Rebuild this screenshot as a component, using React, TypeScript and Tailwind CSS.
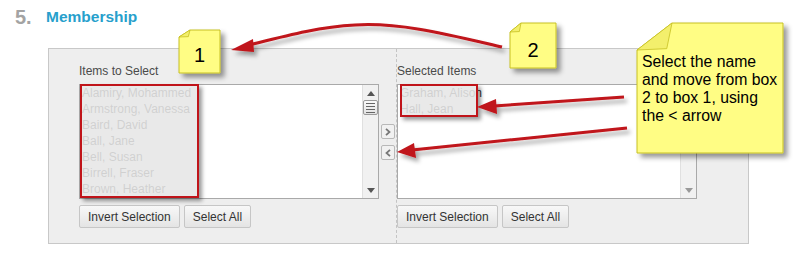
import React from "react";

const leftItems = [
  "Alamiry, Mohammed",
  "Armstrong, Vanessa",
  "Baird, David",
  "Ball, Jane",
  "Bell, Susan",
  "Birrell, Fraser",
  "Brown, Heather",
];
const rightItems = ["Graham, Alison", "Hall, Jean"];

function Btn({ children }: { children: React.ReactNode }) {
  return (
    <button className="h-[23px] px-[8px] border border-[#c6c6c6] rounded-[2px] bg-gradient-to-b from-[#f8f8f8] to-[#e4e4e4] text-[12px] text-[#333] leading-none">
      {children}
    </button>
  );
}

function UpTri({ color }: { color: string }) {
  return (
    <svg width="8" height="5" viewBox="0 0 8 5">
      <polygon points="0,5 8,5 4,0" fill={color} />
    </svg>
  );
}
function DownTri({ color }: { color: string }) {
  return (
    <svg width="8" height="5" viewBox="0 0 8 5">
      <polygon points="0,0 8,0 4,5" fill={color} />
    </svg>
  );
}

function Note({
  x,
  y,
  w,
  h,
  cx,
  cy,
}: {
  x: number;
  y: number;
  w: number;
  h: number;
  cx: number;
  cy: number;
}) {
  const pts = `${x + cx},${y} ${x + w},${y} ${x + w},${y + h} ${x},${y + h} ${x},${y + cy}`;
  return (
    <g>
      <polygon points={pts} fill="#fffd84" stroke="#c7c023" strokeWidth="1" filter="url(#nsh)" />
      <polygon
        points={`${x},${y + cy} ${x + cx},${y} ${x + cx * 0.85},${y + cy * 0.95}`}
        fill="#f3ef6c"
        stroke="#c7c023"
        strokeWidth="0.8"
      />
    </g>
  );
}

export default function App() {
  return (
    <div className="relative w-[794px] h-[254px] bg-white overflow-hidden font-['Liberation_Sans',Arial,sans-serif]">
      {/* Title */}
      <div className="h-[48px] flex items-start pl-[15px] pt-[5px]">
        <span className="w-[31px] text-[20px] font-bold text-[#a3a3a3] leading-[24px]">5.</span>
        <span className="text-[15.5px] font-bold text-[#27a0cc] leading-[24px]">Membership</span>
      </div>

      {/* Panel */}
      <div className="ml-[48px] w-[701px] h-[196px] border border-[#c8c8c8] bg-[#eeeeee] flex">
        {/* Left column */}
        <div className="pl-[30px] pt-[14px] w-[330px] shrink-0">
          <div className="h-[16px] leading-[16px] text-[12px] text-[#4a4a4a]">Items to Select</div>
          <div className="relative mt-[5px] w-[300px] h-[115px] bg-white border border-[#a9a9a9]">
            <div className="text-[12px] leading-[16px] text-[#333] pl-[2px]">
              {leftItems.map((t) => (
                <div key={t}>{t}</div>
              ))}
            </div>
            {/* scrollbar */}
            <div className="absolute right-0 top-0 bottom-0 w-[16px] bg-[#f1f1f1] border-l border-[#e0e0e0] flex flex-col items-center">
              <div className="mt-[6px]">
                <UpTri color="#555" />
              </div>
              <div className="mt-[4px] w-[15px] h-[15px] border border-[#9a9a9a] rounded-[2px] bg-gradient-to-b from-[#fafafa] to-[#e2e2e2] flex flex-col items-center justify-center gap-[2px]">
                <div className="w-[9px] h-[1px] bg-[#666]" />
                <div className="w-[9px] h-[1px] bg-[#666]" />
                <div className="w-[9px] h-[1px] bg-[#666]" />
                <div className="w-[9px] h-[1px] bg-[#666]" />
              </div>
              <div className="mt-auto mb-[5px]">
                <DownTri color="#555" />
              </div>
            </div>
            {/* annotation box */}
            <div className="absolute left-[0px] top-[-1px] w-[119px] h-[114px] border-2 border-[#c0141a] bg-[rgba(230,230,230,0.88)] shadow-[3px_3px_4px_rgba(0,0,0,0.4)]" />
          </div>
          <div className="mt-[6px] flex gap-[4px]">
            <Btn>Invert Selection</Btn>
            <Btn>Select All</Btn>
          </div>
        </div>

        {/* Middle arrows */}
        <div className="ml-[2px] w-[14px] pt-[75px] flex flex-col gap-[6px] shrink-0">
          <div className="w-[14px] h-[15px] border border-[#b8b8b8] rounded-[2px] bg-[#f1f1f1] flex items-center justify-center">
            <svg width="6" height="8" viewBox="0 0 6 8">
              <polyline points="1,0.8 4.5,4 1,7.2" fill="none" stroke="#777" strokeWidth="1.8" />
            </svg>
          </div>
          <div className="w-[14px] h-[15px] border border-[#b8b8b8] rounded-[2px] bg-[#f1f1f1] flex items-center justify-center">
            <svg width="6" height="8" viewBox="0 0 6 8">
              <polyline points="5,0.8 1.5,4 5,7.2" fill="none" stroke="#777" strokeWidth="1.8" />
            </svg>
          </div>
        </div>

        {/* Right column */}
        <div className="ml-[1px] border-l border-dashed border-[#c4c4c4] pt-[14px] flex-1">
          <div className="h-[16px] leading-[16px] text-[12px] text-[#4a4a4a]">Selected Items</div>
          <div className="relative mt-[5px] w-[300px] h-[115px] bg-white border border-[#a9a9a9]">
            <div className="text-[12px] leading-[16px] text-[#333] pl-[2px]">
              {rightItems.map((t) => (
                <div key={t}>{t}</div>
              ))}
            </div>
            <div className="absolute right-0 top-0 bottom-0 w-[16px] bg-[#f1f1f1] border-l border-[#e0e0e0] flex flex-col items-center">
              <div className="mt-[6px]">
                <UpTri color="#aaa" />
              </div>
              <div className="mt-auto mb-[5px]">
                <DownTri color="#999" />
              </div>
            </div>
            <div className="absolute left-[2px] top-[-1px] w-[78px] h-[33px] border-2 border-[#c0141a] bg-[rgba(230,230,230,0.88)] shadow-[3px_3px_4px_rgba(0,0,0,0.4)]" />
          </div>
          <div className="mt-[6px] flex gap-[4px]">
            <Btn>Invert Selection</Btn>
            <Btn>Select All</Btn>
          </div>
        </div>
      </div>

      {/* Annotations overlay */}
      <svg className="absolute left-0 top-0 pointer-events-none" width="794" height="254" viewBox="0 0 794 254">
        <defs>
          <filter id="ash" x="-20%" y="-50%" width="140%" height="200%">
            <feDropShadow dx="3" dy="4" stdDeviation="2" floodColor="#000" floodOpacity="0.35" />
          </filter>
          <filter id="nsh" x="-20%" y="-20%" width="150%" height="150%">
            <feDropShadow dx="4" dy="4" stdDeviation="2.5" floodColor="#000" floodOpacity="0.4" />
          </filter>
        </defs>
        <g filter="url(#ash)">
          <path d="M502,47 C450,35 400,22 355,25 C318,27 285,36 249,45" fill="none" stroke="#c0141a" strokeWidth="3" />
          <polygon points="231,50 253,39 254,52" fill="#c0141a" />
          <path d="M624,97 L494,106" fill="none" stroke="#c0141a" strokeWidth="3" />
          <polygon points="477,107 496,99 497,114" fill="#c0141a" />
          <path d="M627,128 L412,150" fill="none" stroke="#c0141a" strokeWidth="3" />
          <polygon points="397,152 414,143 416,158" fill="#c0141a" />
        </g>
        <Note x={179} y={30} w={41} h={43} cx={11} cy={7} />
        <Note x={510} y={23} w={46} h={45} cx={11} cy={9} />
        <Note x={637} y={23} w={146} h={130} cx={35} cy={27} />
      </svg>

      {/* Note texts */}
      <div className="absolute left-[179px] top-[37px] w-[41px] h-[36px] flex items-center justify-center text-[20px] text-black leading-none">
        1
      </div>
      <div className="absolute left-[510px] top-[32px] w-[46px] h-[36px] flex items-center justify-center text-[20px] text-black leading-none">
        2
      </div>
      <div className="absolute left-[642px] top-[53px] w-[140px] text-[15.8px] leading-[18px] text-black">
        Select the name
        <br />
        and move from box
        <br />
        2 to box 1, using
        <br />
        the &lt; arrow
      </div>
    </div>
  );
}
